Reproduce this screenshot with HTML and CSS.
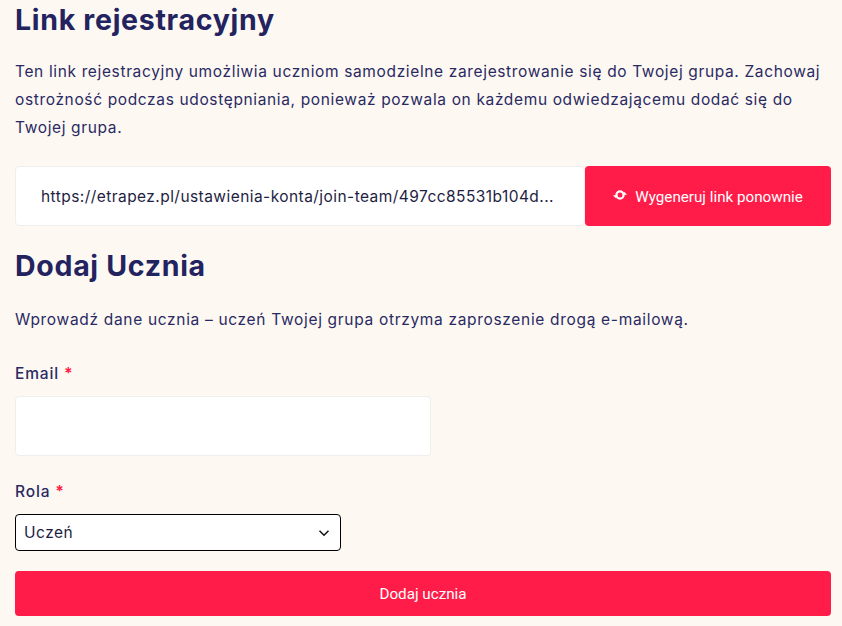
FILE: index.html
```html
<!DOCTYPE html>
<html lang="pl">
<head>
<meta charset="utf-8">
<title>Link rejestracyjny</title>
<link rel="stylesheet" href="styles.css">
</head>
<body>
<main class="page">
  <section class="link-section">
    <h2 class="title">Link rejestracyjny</h2>
    <p class="text">Ten link rejestracyjny umożliwia uczniom samodzielne zarejestrowanie się do Twojej grupa. Zachowaj ostrożność podczas udostępniania, ponieważ pozwala on każdemu odwiedzającemu dodać się do Twojej grupa.</p>
    <div class="link-row">
      <div class="link-box"><span class="link-url">https://etrapez.pl/ustawienia-konta/join-team/497cc85531b104d...</span></div>
      <button class="btn btn-regen" type="button">
        <svg class="regen-icon" width="14" height="12" viewBox="0 0 14 12" aria-hidden="true">
          <circle cx="7" cy="6" r="3.6" fill="none" stroke="#fff" stroke-width="2.2"/>
          <path d="M9 5.8 L14 5.8 L11.5 3 Z" fill="#fff"/>
          <path d="M0 6.2 L5 6.2 L2.5 9 Z" fill="#fff"/>
        </svg>
        <span>Wygeneruj link ponownie</span>
      </button>
    </div>
  </section>
  <section class="add-section">
    <h2 class="title">Dodaj Ucznia</h2>
    <p class="text intro">Wprowadź dane ucznia – uczeń Twojej grupa otrzyma zaproszenie drogą e-mailową.</p>
    <form class="form">
      <div class="field">
        <label class="label" for="email">Email <span class="req">*</span></label>
        <input class="input" id="email" type="email">
      </div>
      <div class="field">
        <label class="label" for="role">Rola <span class="req">*</span></label>
        <div class="select-wrap">
          <select class="select" id="role"><option>Uczeń</option></select>
          <svg class="chevron" width="12" height="8" viewBox="0 0 12 8" aria-hidden="true"><path d="M1.5 1.8 L6 6.2 L10.5 1.8" fill="none" stroke="#111" stroke-width="1.5"/></svg>
        </div>
      </div>
      <button class="btn btn-submit" type="button">Dodaj ucznia</button>
    </form>
  </section>
</main>
</body>
</html>
```
FILE: styles.css
```css
* { box-sizing: border-box; }
html, body { margin: 0; height: 100%; overflow: hidden; }
body {
  background: #fdf8f2;
  color: #2a2a63;
  font-family: "Inter", "Liberation Sans", sans-serif;
}
.page { padding: 0 11px 0 15px; }
.title {
  margin: 0;
  font-size: 28.5px;
  letter-spacing: 0.7px;
  line-height: 40px;
  font-weight: 700;
  color: #232360;
}
.text {
  margin: 0;
  font-size: 15.5px;
  letter-spacing: 0.64px;
  line-height: 28px;
}
.intro { letter-spacing: 0.68px; }
.link-section .title { margin-bottom: 18px; }
.link-row { display: flex; margin-top: 24px; height: 60px; }
.link-box {
  width: 570px;
  background: #fff;
  border: 1px solid #f0eeeb;
  border-radius: 4px;
  padding: 0 25px;
  display: flex;
  align-items: center;
  color: #1e1e42;
  font-size: 15.5px;
  letter-spacing: 0.44px;
  min-width: 0;
}
.link-url { white-space: nowrap; }
.btn {
  border: 0;
  border-radius: 4px;
  background: #ff1c49;
  color: #fff;
  font-family: "Roboto", "Liberation Sans", sans-serif;
  font-size: 15.2px;
  display: flex;
  align-items: center;
  justify-content: center;
}
.btn-regen { flex: 1; gap: 8px; padding-top: 3px; }
.regen-icon { position: relative; top: -2px; }
.add-section { margin-top: 20px; }
.add-section .title { margin-bottom: 20px; }
.form { margin-top: 28px; }
.field { display: flex; flex-direction: column; align-items: flex-start; }
.label { font-size: 15.5px; letter-spacing: 0.85px; line-height: 24px; font-weight: 500; margin-bottom: 10px; }
.req { color: #ff1c49; font-weight: 700; }
.input {
  width: 416px;
  height: 60px;
  background: #fff;
  border: 1px solid #f0eeeb;
  border-radius: 4px;
  margin-bottom: 24px;
}
.select-wrap { position: relative; width: 326px; height: 37px; margin-bottom: 20px; }
.select {
  appearance: none;
  width: 100%;
  height: 100%;
  background-color: #fff;
  border: 1px solid #000;
  border-radius: 4px;
  padding: 0 8px;
  color: #1e1e42;
  font-family: inherit;
  font-size: 15.5px;
  letter-spacing: 0.5px;
  display: block;
}
.chevron { position: absolute; right: 11px; top: 15px; pointer-events: none; }
.btn-submit { width: 100%; height: 45px; }
```
